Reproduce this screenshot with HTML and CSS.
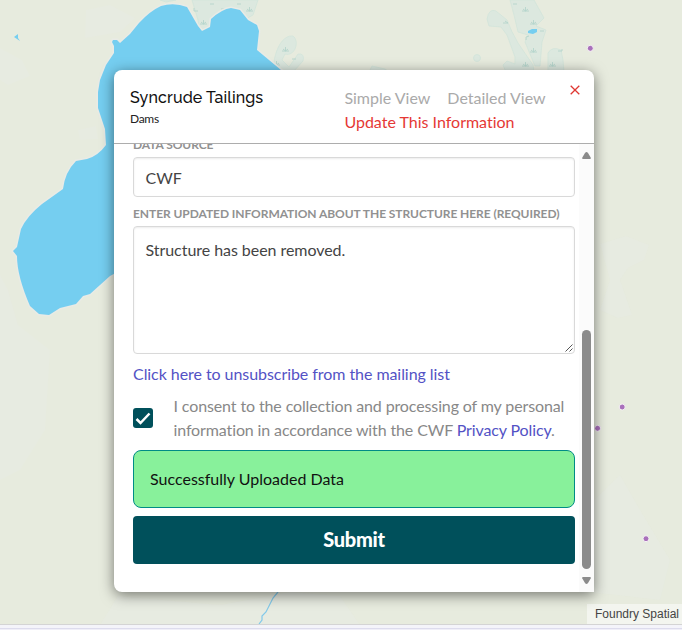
FILE: index.html
```
<!DOCTYPE html>
<html lang="en">
<head>
<meta charset="utf-8">
<title>Syncrude Tailings</title>
<link rel="stylesheet" href="styles.css">
</head>
<body>
<div class="map">
  <svg class="terrain" viewBox="0 0 682 625" width="682" height="625" aria-hidden="true">
    <g fill="#e7ebe4" opacity=".5">
      <path d="M0 48L22 60 30 76 8 85 0 80ZM0 275L8 290 18 325 50 350 45 430 20 470 0 480ZM78 130L96 126 98 139 80 140Z"/>
      <path d="M86 10L110 5 135 18 120 32 85 38ZM600 244L626 236 649 245 644 260 628 268 620 280 632 315 618 318 600 310 610 280ZM594 500L620 475 640 510 670 560 660 600 590 592ZM100 625L118 596 220 605 290 592 340 596 360 625Z"/>
    </g>
    <g fill="#dce8df" stroke="#d0e4da" stroke-width=".7">
      <path d="M160 0H176L166 2ZM192 0H258L253 15 240 22 200 35 198 20Z"/>
      <path d="M274 62C276 48 283 35 293 36 300 41 295 57 285 54L282 60 289 67 298 54Q305 53 303 61L293 72H270Z"/>
      <path d="M372 66L385 69 389 72H369Z"/>
      <path d="M487 19Q489 8 496 11L507 20Q511 31 518 43L533 65 534 72H506L503 65 507 61 515 64 515 57 507 35 501 27 489 26Z"/>
      <path d="M510 0H534L544 18 536 26 546 30 542 42 540 66 535 66 525 42 528 35 518 32 514 15Z"/>
      <path d="M548 53Q552 46 561 50L563 60 564 72H548Z"/>
      <circle cx="477" cy="58" r="3.5"/>
    </g>
    <g fill="none" stroke="#b4d5cc" stroke-width=".9">
      <path id="reed" d="M522 11H529M525.500 7V11M523 9L525.500 11 528 9"/>
      <use href="#reed" x="8" y="13"/><use href="#reed" x="8" y="41"/>
      <use href="#reed" x="0" y="55"/><use href="#reed" x="27" y="55"/>
      <use href="#reed" x="-240" y="40"/><use href="#reed" x="-322" y="13"/>
      <use href="#reed" x="-276" y="0"/><use href="#reed" x="-249" y="54"/>
      <path d="M503 23H508L505 21M540 31H544M526 40V37L529 36M558 51H562V49M292 59H296M513 4H517M194 8V11H198M210 4H214M237 4H241M221 9H225"/>
    </g>
    <path class="lake" d="M113 40L112 42 114 46 114 53 106 65 100 80 98 92 98 108 105 129 106 145Q98 156 87 159L76 161Q65 172 63 189L42 204Q27 216 21 229L17 247 13 251 17 256Q17 276 30 306L39 314 49 315 60 308 76 304 83 296 90 294 110 276 125 268H360L350 110 281 70 257 50 259 31 257 25 248 20 240 10 231 8Q222 9 211 19L210 27 202 31 198 26 187 7Q174 2 161 6 150 11 139 23L130 34 120 43 117 40Z"/>
    <path d="M14 37L18 34 18 38 20 41ZM528 31L532 29H537V32L533 34 528 33Z" fill="#75cef0"/>
    <path d="M278 592L273 598 266 612 262 616 262 620 259 624" fill="none" stroke="#82c9ea" stroke-width="1.200"/>
    <g fill="#a970bb" stroke="#f6f2f5" stroke-width="1">
      <circle cx="590.300" cy="48.300" r="3"/><circle cx="622.200" cy="407" r="3"/>
      <circle cx="597.600" cy="428.300" r="3"/><circle cx="646" cy="538.700" r="3"/>
    </g>
  </svg>
  <div class="attribution">Foundry Spatial</div>

  <section class="popup">
    <header class="header">
      <div class="heading">
        <h1>Syncrude Tailings</h1>
        <p>Dams</p>
      </div>
      <nav class="tabs">
        <a>Simple View</a><a>Detailed View</a><a class="active">Update This Information</a>
      </nav>
      <svg class="close" viewBox="0 0 10 10" width="10" height="10" aria-label="Close"><path d="M.7.7L9.300 9.300M9.300.7L.7 9.300"/></svg>
    </header>
    <div class="body">
      <form class="form">
        <label>DATA SOURCE</label>
        <div class="input">CWF</div>
        <label class="second">ENTER UPDATED INFORMATION ABOUT THE STRUCTURE HERE (REQUIRED)</label>
        <div class="input area">Structure has been removed.
          <svg class="grip" viewBox="0 0 8 8" width="8" height="8"><path d="M.5 7.500L7.500.5M4.500 7.500L7.500 4.500"/></svg>
        </div>
        <a class="link unsubscribe">Click here to unsubscribe from the mailing list</a>
        <div class="consent">
          <svg class="check" viewBox="0 0 20 20" width="20" height="20"><rect width="20" height="20" rx="3"/><path d="M3.500 11L7.500 15 16.500 5.500"/></svg>
          <p>I consent to the collection and processing of my personal information in accordance with the CWF <a class="link">Privacy Policy</a>.</p>
        </div>
        <div class="notice">Successfully Uploaded Data</div>
        <button type="button">Submit</button>
      </form>
      <div class="scrollbar">
        <svg viewBox="0 0 9 7" width="9" height="7"><path d="M4.500 0Q5.300 0 6 1L8.700 5.500Q9.200 7 8 7H1Q-.2 7 .3 5.500L3 1Q3.700 0 4.500 0Z"/></svg>
        <div class="thumb"></div>
        <svg class="down" viewBox="0 0 9 7" width="9" height="7"><path d="M4.500 0Q5.300 0 6 1L8.700 5.500Q9.200 7 8 7H1Q-.2 7 .3 5.500L3 1Q3.700 0 4.500 0Z"/></svg>
      </div>
    </div>
  </section>
</div>
<div class="footer"></div>
</body>
</html>
```
FILE: styles.css
```
* { box-sizing: border-box; }
body { margin: 0; width: 682px; height: 630px; overflow: hidden; font: 16px/24px Lato, sans-serif; font-variant-ligatures: none; }
h1, p { margin: 0; }
.map { position: relative; height: 624px; background: #e7ebde; overflow: hidden; }
.terrain { display: block; }
.lake { fill: #75cef0; stroke: #e9ebe6; stroke-width: 3px; paint-order: stroke; }
.attribution { position: absolute; right: 0; bottom: 0; height: 20px; padding: 0 3px 0 8px; background: #f3f5ef; color: #444; font: 12px/20px "Liberation Sans", sans-serif; white-space: nowrap; }
.footer { height: 6px; background: #f4f4fa; border-top: 1px solid #d4d4d4; box-shadow: inset 0 -1px #f0eff8, inset 0 -2px #dddced; }
.popup { position: absolute; left: 114px; top: 70px; width: 480px; height: 522px; display: flex; flex-direction: column; background: #fff; border-radius: 8px 8px 0 8px; box-shadow: 0 3px 14px rgba(0, 0, 0, .5); overflow: hidden; }
.header { display: flex; flex: none; height: 74px; padding: 16px 14px 0 16px; border-bottom: 1px solid #adadad; }
.heading { width: 214px; padding-top: 1px; color: #111; }
h1 { font: 500 16px/22px Raleway, Lato, sans-serif; letter-spacing: .12px; }
.heading p { font-size: 12px; line-height: 19px; font-weight: 400; letter-spacing: -.3px; color: #222; }
.tabs { display: flex; flex-wrap: wrap; align-content: flex-start; column-gap: 17px; width: 211px; padding-left: .4px; color: #aaa; }
.active { color: #e53935; }
.close { margin: -1px 0 0 15px; overflow: visible; fill: none; stroke: #df3732; stroke-width: 1.3px; }
.body { display: flex; flex: 1; min-height: 0; overflow: hidden; }
.form { display: flex; flex-direction: column; flex: none; width: 442px; margin: -7px 4px 0 19px; }
label { height: 16px; margin-bottom: 4px; color: #919191; font-size: 12px; line-height: 16px; font-weight: 700; letter-spacing: -.065px; white-space: nowrap; }
.second { margin-top: 9px; }
.input { flex: none; height: 40px; padding: 8px 11.500px; line-height: 24px; letter-spacing: -.05px; color: #444; border: 1px solid #d9d9d9; border-radius: 4px; box-shadow: inset 0 1px 2px rgba(0, 0, 0, .08); }
.area { position: relative; height: 128px; padding-top: 11px; }
.grip { position: absolute; right: 1px; bottom: 1px; fill: none; stroke: #555; stroke-width: 1px; }
.link { color: #5352c5; }
.unsubscribe { margin-top: 8px; letter-spacing: -.06px; }
.consent { display: flex; gap: 20.500px; align-items: center; height: 48px; margin: 8px 0; color: #888; letter-spacing: -.12px; }
.consent p { flex: 1; }
.check { flex: none; fill: #00505b; }
.check path { fill: none; stroke: #fff; stroke-width: 2.5px; }
.notice { height: 58px; flex: none; padding: 16px; background: #88f19b; border: 1px solid #008c86; border-radius: 8px; color: #111; }
button { flex: none; height: 48px; margin-top: 8px; padding: 0 0 1px; border: 0; border-radius: 4px; background: #00505b; color: #fff; font: 900 20px/47px Lato, sans-serif; letter-spacing: -.3px; }
.scrollbar { display: flex; flex-direction: column; align-items: center; flex: none; width: 15px; padding: 8px 0; background: #fbfbfb; }
.scrollbar svg { flex: none; fill: #8b8b8b; }
.thumb { width: 9px; height: 239px; margin: 171px 0 8px; border-radius: 5px; background: #8b8b8b; }
.down { transform: rotate(180deg); }
```
